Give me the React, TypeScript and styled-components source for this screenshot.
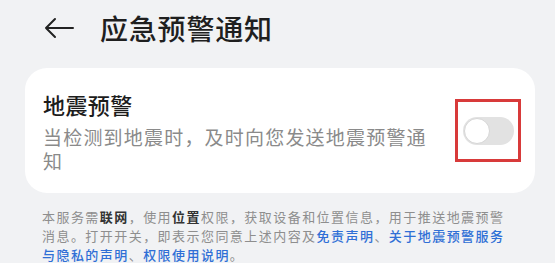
import React from "react";
import styled, { createGlobalStyle } from "styled-components";

const GlobalStyle = createGlobalStyle`
  html, body {
    margin: 0;
    padding: 0;
    background: #f1f2f4;
  }
  body {
    font-family: "Noto Sans CJK SC", "Noto Sans", sans-serif;
    width: 555px;
    height: 263px;
    overflow: hidden;
  }
`;

const Page = styled.div`
  display: flex;
  flex-direction: column;
  width: 555px;
`;

const Header = styled.header`
  display: flex;
  align-items: center;
  height: 56px;
  padding-left: 44px;
  gap: 26px;
`;

const BackButton = styled.button`
  display: flex;
  align-items: center;
  justify-content: center;
  width: 30px;
  height: 30px;
  padding: 0;
  border: none;
  background: transparent;
  color: #222;
`;

const Title = styled.h1`
  margin: 0;
  font-size: 28px;
  font-weight: 500;
  color: #1f1f1f;
  letter-spacing: 0.8px;
  line-height: 36px;
`;

const Card = styled.section`
  display: flex;
  align-items: center;
  justify-content: space-between;
  margin: 12px 20px 0 25px;
  height: 125px;
  box-sizing: border-box;
  padding: 0 14px 0 18px;
  background: #ffffff;
  border-radius: 22px;
`;

const TextCol = styled.div`
  display: flex;
  flex-direction: column;
  width: 400px;
`;

const ItemTitle = styled.div`
  font-size: 22px;
  font-weight: 500;
  color: #1c1c1c;
  line-height: 30px;
  letter-spacing: 0.4px;
`;

const ItemDesc = styled.div`
  margin-top: 6px;
  font-size: 19px;
  line-height: 24px;
  color: #8a8a8a;
  letter-spacing: 1.2px;
`;

const Highlight = styled.div`
  display: flex;
  align-items: center;
  justify-content: center;
  width: 66px;
  height: 63px;
  box-sizing: border-box;
  border: 3px solid #d83a3a;
  padding-left: 1px;
`;

const Switch = styled.button<{ $on: boolean }>`
  position: relative;
  width: 51px;
  height: 28px;
  padding: 0;
  border: none;
  border-radius: 14px;
  background: ${(p) => (p.$on ? "#2f6fd6" : "#e2e2e2")};
`;

const Knob = styled.span<{ $on: boolean }>`
  position: absolute;
  top: 1px;
  left: ${(p) => (p.$on ? "24px" : "1px")};
  width: 26px;
  height: 26px;
  box-sizing: border-box;
  border-radius: 50%;
  background: #ffffff;
  border: 1px solid #d6d6d6;
`;

const Footer = styled.p`
  margin: 14px 0 0 42px;
  font-size: 13px;
  line-height: 19px;
  color: #8e8e8e;
  letter-spacing: 1.45px;
`;

const Strong = styled.b`
  font-weight: 700;
  color: #333333;
`;

const Link = styled.a`
  color: #2f6fd6;
  font-weight: 500;
  text-decoration: none;
`;

export default function App() {
  const [on, setOn] = React.useState(false);
  return (
    <>
      <GlobalStyle />
      <Page>
        <Header>
          <BackButton aria-label="返回">
            <svg width="30" height="22" viewBox="0 0 30 22" fill="none">
              <path
                d="M29 11H2M11 2L2 11l9 9"
                stroke="#222"
                strokeWidth="2"
                strokeLinecap="round"
                strokeLinejoin="round"
              />
            </svg>
          </BackButton>
          <Title>应急预警通知</Title>
        </Header>
        <Card>
          <TextCol>
            <ItemTitle>地震预警</ItemTitle>
            <ItemDesc>当检测到地震时，及时向您发送地震预警通知</ItemDesc>
          </TextCol>
          <Highlight>
            <Switch $on={on} onClick={() => setOn(!on)} aria-label="地震预警">
              <Knob $on={on} />
            </Switch>
          </Highlight>
        </Card>
        <Footer>
          本服务需<Strong>联网</Strong>，使用<Strong>位置</Strong>权限，获取设备和位置信息，用于推送地震预警
          <br />
          消息。打开开关，即表示您同意上述内容及<Link>免责声明</Link>、<Link>关于地震预警服务</Link>
          <br />
          <Link>与隐私的声明</Link>、<Link>权限使用说明</Link>。
        </Footer>
      </Page>
    </>
  );
}
